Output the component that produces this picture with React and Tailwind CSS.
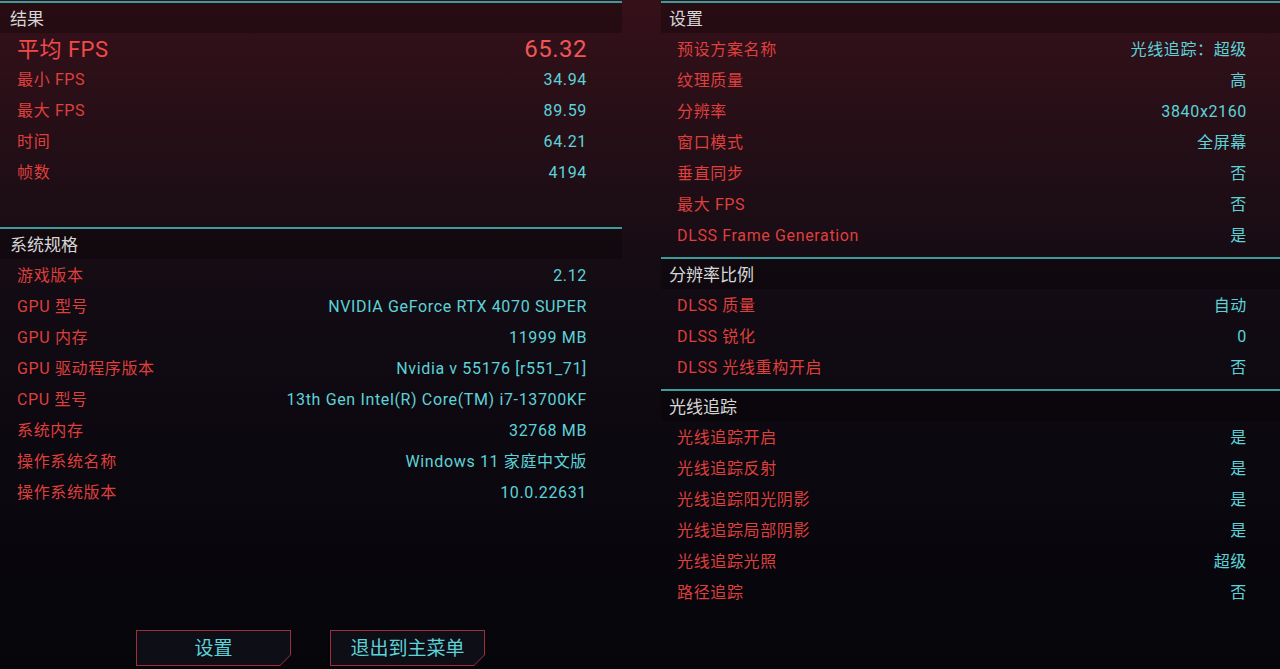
const results = [
  ['最小 FPS', '34.94'],
  ['最大 FPS', '89.59'],
  ['时间', '64.21'],
  ['帧数', '4194'],
]

const specs = [
  ['游戏版本', '2.12'],
  ['GPU 型号', 'NVIDIA GeForce RTX 4070 SUPER'],
  ['GPU 内存', '11999 MB'],
  ['GPU 驱动程序版本', 'Nvidia v 55176 [r551_71]'],
  ['CPU 型号', '13th Gen Intel(R) Core(TM) i7-13700KF'],
  ['系统内存', '32768 MB'],
  ['操作系统名称', 'Windows 11 家庭中文版'],
  ['操作系统版本', '10.0.22631'],
]

const settings = [
  ['预设方案名称', '光线追踪：超级'],
  ['纹理质量', '高'],
  ['分辨率', '3840x2160'],
  ['窗口模式', '全屏幕'],
  ['垂直同步', '否'],
  ['最大 FPS', '否'],
  ['DLSS Frame Generation', '是'],
]

const scaling = [
  ['DLSS 质量', '自动'],
  ['DLSS 锐化', '0'],
  ['DLSS 光线重构开启', '否'],
]

const rayTracing = [
  ['光线追踪开启', '是'],
  ['光线追踪反射', '是'],
  ['光线追踪阳光阴影', '是'],
  ['光线追踪局部阴影', '是'],
  ['光线追踪光照', '超级'],
  ['路径追踪', '否'],
]

const SectionHeader = ({ title, indent }) => (
  <div>
    <div className="h-[2px] bg-[#3c9c9c]" />
    <div className={`h-[30px] flex items-center pt-[3px] bg-black/25 text-[17px] text-[#d6d6d6] ${indent}`}>
      {title}
    </div>
  </div>
)

const Row = ({ label, value, pl, pr }) => (
  <div className={`h-[31px] flex items-center justify-between pt-[2px] text-[16px] tracking-[0.04em] ${pl} ${pr}`}>
    <span className="text-[#df3f3d]">{label}</span>
    <span className="text-[#5dd3d8]">{value}</span>
  </div>
)

const CutButton = ({ children }) => (
  <div className="w-[155px] h-[36px] p-px bg-[#9c2f3a] [clip-path:polygon(0_0,100%_0,100%_calc(100%-11px),calc(100%-11px)_100%,0_100%)]">
    <div className="w-full h-full flex items-center justify-center pt-[2px] bg-[#0e0e17] text-[19px] text-[#5dd3d8] [clip-path:polygon(0_0,100%_0,100%_calc(100%-10px),calc(100%-10px)_100%,0_100%)]">
      {children}
    </div>
  </div>
)

export default function App() {
  return (
    <div
      className="w-[1280px] h-[669px] overflow-hidden flex gap-[39px] pt-px bg-gradient-to-b from-[#351019] via-[#120b13] via-45% to-[#05050a]"
      style={{ fontFamily: 'Roboto, "Noto Sans CJK SC", sans-serif' }}
    >
      <div className="w-[622px] h-full flex flex-col">
        <SectionHeader title="结果" indent="pl-[10px]" />
        <div className="h-[30px] flex items-center justify-between pt-[2px] pl-[17px] pr-[35px] tracking-[0.03em]">
          <span className="text-[22px] text-[#f04a4a]">平均 FPS</span>
          <span className="text-[24px] text-[#f05656]">65.32</span>
        </div>
        {results.map(([l, v]) => (
          <Row key={l} label={l} value={v} pl="pl-[17px]" pr="pr-[35px]" />
        ))}
        <div className="h-[40px]" />
        <SectionHeader title="系统规格" indent="pl-[10px]" />
        {specs.map(([l, v]) => (
          <Row key={l} label={l} value={v} pl="pl-[17px]" pr="pr-[35px]" />
        ))}
        <div className="mt-auto mb-[3px] flex gap-[39px] pl-[136px]">
          <CutButton>设置</CutButton>
          <CutButton>退出到主菜单</CutButton>
        </div>
      </div>

      <div className="flex-1 flex flex-col">
        <SectionHeader title="设置" indent="pl-[8px]" />
        {settings.map(([l, v]) => (
          <Row key={l} label={l} value={v} pl="pl-[16px]" pr="pr-[33px]" />
        ))}
        <div className="h-[7px]" />
        <SectionHeader title="分辨率比例" indent="pl-[8px]" />
        {scaling.map(([l, v]) => (
          <Row key={l} label={l} value={v} pl="pl-[16px]" pr="pr-[33px]" />
        ))}
        <div className="h-[7px]" />
        <SectionHeader title="光线追踪" indent="pl-[8px]" />
        {rayTracing.map(([l, v]) => (
          <Row key={l} label={l} value={v} pl="pl-[16px]" pr="pr-[33px]" />
        ))}
      </div>
    </div>
  )
}
